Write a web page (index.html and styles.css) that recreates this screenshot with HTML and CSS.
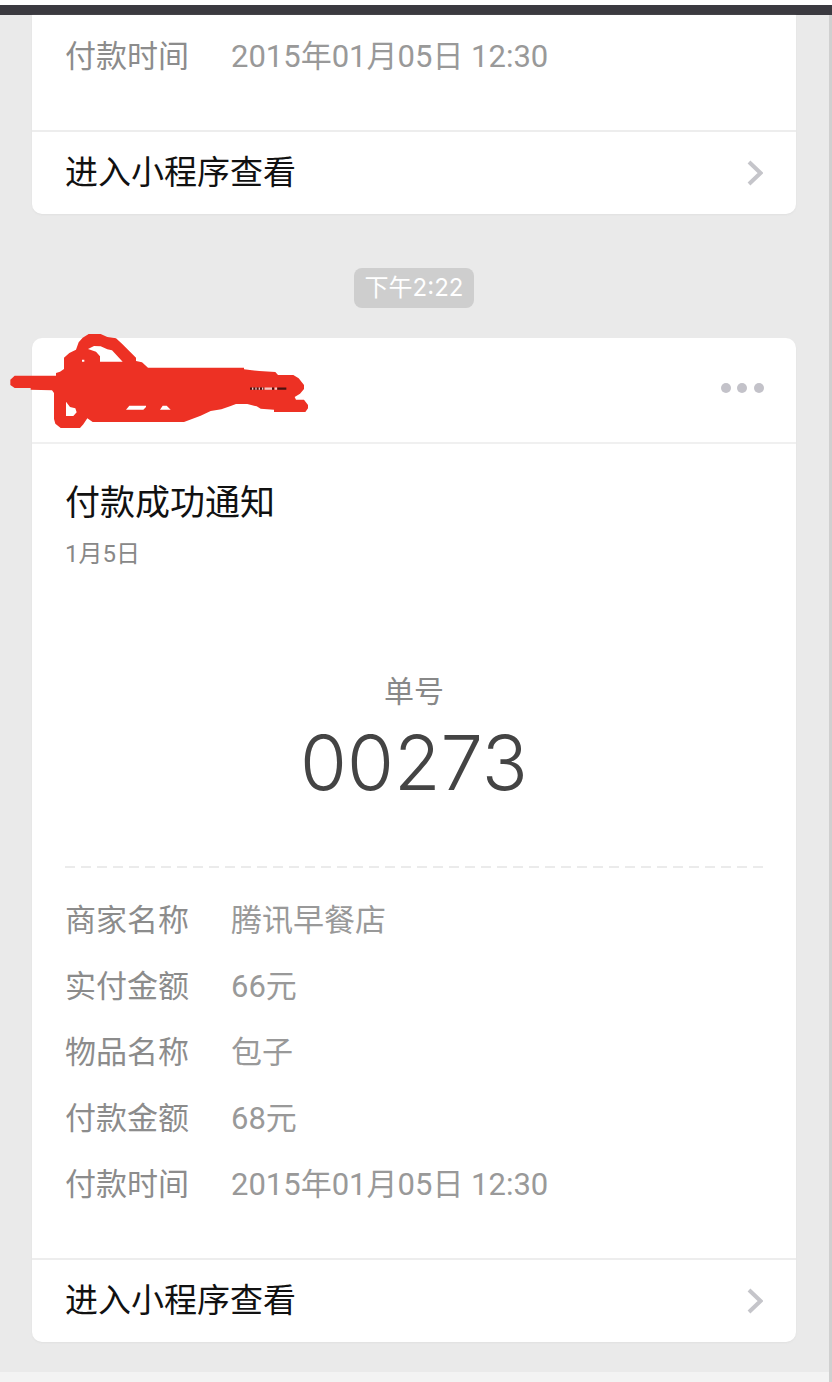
FILE: index.html
```html
<!DOCTYPE html>
<html lang="zh-CN">
<head>
<meta charset="utf-8">
<meta name="viewport" content="width=device-width, initial-scale=1">
<title>付款成功通知</title>
<link rel="stylesheet" href="styles.css">
</head>
<body>
<header class="topbar"></header>
<main class="chat">
  <article class="card card-first">
    <dl class="details">
      <div class="row"><dt>付款时间</dt><dd>2015年01月05日 12:30</dd></div>
    </dl>
    <a class="enter" href="#mini"><span class="enter-text">进入小程序查看</span>
      <svg class="chevron" viewBox="0 0 16 26" aria-hidden="true"><path d="M2 2 13.500 13 2 24"/></svg>
    </a>
  </article>

  <time class="stamp">下午2:22</time>

  <article class="card">
    <header class="card-head">
      <button class="more" type="button" aria-label="更多">
        <svg viewBox="0 0 44 12" aria-hidden="true"><circle cx="5" cy="6" r="5"/><circle cx="21" cy="6" r="5"/><circle cx="38" cy="6" r="5"/></svg>
      </button>
    </header>
    <section class="card-body">
      <h1 class="title">付款成功通知</h1>
      <p class="date">1月5日</p>
      <p class="order-label">单号</p>
      <p class="order-number">00273</p>
      <hr class="dashes">
    </section>
    <dl class="details">
      <div class="row"><dt>商家名称</dt><dd>腾讯早餐店</dd></div>
      <div class="row"><dt>实付金额</dt><dd>66元</dd></div>
      <div class="row"><dt>物品名称</dt><dd>包子</dd></div>
      <div class="row"><dt>付款金额</dt><dd>68元</dd></div>
      <div class="row"><dt>付款时间</dt><dd>2015年01月05日 12:30</dd></div>
    </dl>
    <a class="enter" href="#mini"><span class="enter-text">进入小程序查看</span>
      <svg class="chevron" viewBox="0 0 16 26" aria-hidden="true"><path d="M2 2 13.500 13 2 24"/></svg>
    </a>
    <svg class="scribble" viewBox="0 0 960 360" aria-hidden="true">
      <path class="ink" fill-rule="evenodd" d="M44 152H168V144L180 140 192 132V98L208 84 228 74 236 52 248 38 266 27H302L322 36 348 40 366 56 408 98V108L426 112 444 128H732V133L778 138 826 141 834 150H880L896 160 912 180V192L900 206 884 216 888 224H912L924 240V250L916 261H822V254L782 251 770 244 742 237H708L690 244 664 253 632 258 602 272 576 282 552 291H278L262 280 250 298 240 309H182L166 296 162 282V204L156 196 92 194V189H44L31 180V164ZM264 72 282 63 302 64 322 73 336 76 368 110H300V94L288 80ZM198 230 210 246 226 250 230 262 220 273H198ZM378 254 388 242H438V246L430 254ZM480 254 488 242H500L512 254ZM246 104H253V110H246Z"/>
      <path class="speck-dark" d="M750 191H792M816 191H822M832 191H859"/>
      <path class="speck-light" d="M756 191H760M766 191H770M776 191H780M786 191H790M794 191H816M824 191H831"/>
    </svg>
  </article>
</main>
<footer class="bottom"></footer>
</body>
</html>
```
FILE: styles.css
```css
* {
  box-sizing: border-box;
}

body {
  margin: 0;
  background: #f3f3f3;
  color: #111;
  font-family: Roboto, "Noto Sans CJK SC", sans-serif;
}

h1, p, dl, dd {
  margin: 0;
}

.topbar {
  height: 15px;
  border-top: 5px solid #fff;
  background: #3b3a40;
}

.chat {
  display: flex;
  flex-direction: column;
  align-items: center;
  padding: 0 33px 30px 32px;
  border-right: 3px solid #d0d0d0;
  background: #eaeaea;
}

.card {
  position: relative;
  align-self: stretch;
  border-radius: 10px;
  background: #fff;
  box-shadow: 0 1px 2px #e0e0e0;
}

.card-first {
  border-radius: 0 0 10px 10px;
}

.card-first .details {
  padding-top: 9px;
}

.stamp {
  margin: 54px 0 30px;
  padding: 0 11px;
  border-radius: 8px;
  background: #cecece;
  color: #fff;
  font: 24px/40px Inter, "Noto Sans CJK SC", sans-serif;
}

.card-head {
  display: flex;
  justify-content: flex-end;
  align-items: center;
  height: 106px;
  padding: 0 31px;
  border-bottom: 2px solid #f0f0f0;
}

.more {
  display: flex;
  padding: 0;
  border: 0;
  background: none;
}

.more svg {
  width: 44px;
  height: 12px;
  margin-bottom: 4px;
  fill: #c3c2c9;
}

.card-body {
  padding: 36px 33px 0;
}

.title {
  font-size: 35px;
  font-weight: 400;
  line-height: 48px;
}

.date {
  margin-top: 10px;
  color: #888;
  font-size: 24px;
  line-height: 32px;
}

.order-label {
  margin-top: 102px;
  color: #888;
  font-size: 30px;
  line-height: 40px;
  text-align: center;
}

.order-number {
  margin-top: 8px;
  color: #444;
  font-family: Inter, Roboto, sans-serif;
  font-size: 76px;
  font-weight: 300;
  line-height: 84px;
  text-align: center;
}

.dashes {
  height: 2px;
  margin: 62px 0 0;
  border: 0;
  background: repeating-linear-gradient(90deg, #ebebeb 0 10px, transparent 10px 16px);
}

.details {
  padding: 20px 33px 40px;
  font-size: 31px;
  line-height: 66px;
}

.row {
  display: flex;
  gap: 42px;
  color: #999;
}

.row dt {
  color: #8c8c8c;
}

.enter {
  display: flex;
  justify-content: space-between;
  align-items: center;
  height: 84px;
  padding: 0 33px;
  border-top: 2px solid #ededed;
  color: #111;
  font-size: 33px;
  text-decoration: none;
}

.enter-text {
  padding-bottom: 6px;
}

.chevron {
  width: 16px;
  height: 26px;
  fill: none;
  stroke: #c5c5ca;
  stroke-width: 4;
}

.scribble {
  position: absolute;
  top: -13px;
  left: -32px;
  width: 320px;
  height: 120px;
  pointer-events: none;
}

.ink {
  fill: #ed3124;
}

.speck-dark {
  stroke: #4a1210;
  stroke-width: 7;
}

.speck-light {
  stroke: #f3c9c4;
  stroke-width: 7;
}

.bottom {
  height: 10px;
  border-right: 3px solid #d0d0d0;
  background: #f3f3f3;
}
```
